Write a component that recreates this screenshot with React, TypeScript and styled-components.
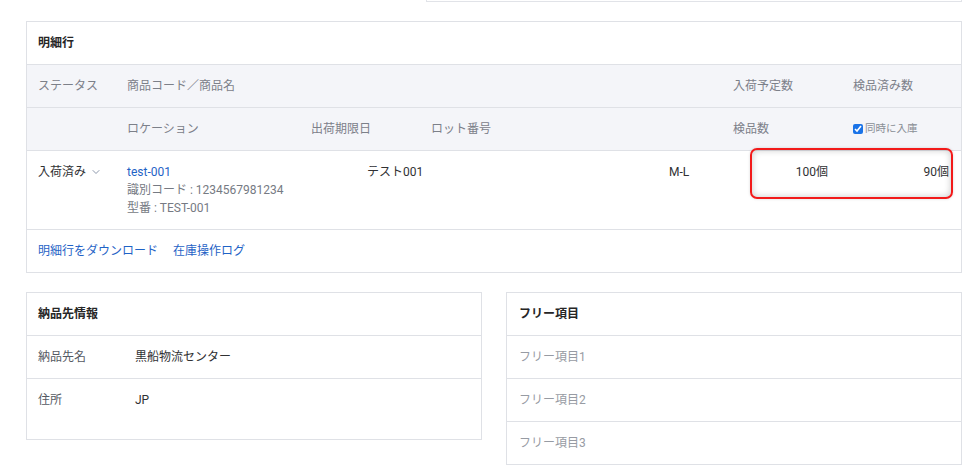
import React from "react";
import styled, { createGlobalStyle } from "styled-components";
import { ChevronDown } from "lucide-react";

const GlobalStyle = createGlobalStyle`
  html, body {
    margin: 0;
    padding: 0;
    background: #ffffff;
  }
  body {
    font-family: Roboto, "Noto Sans CJK JP", "Noto Sans", sans-serif;
    font-size: 12px;
    color: #303133;
  }
`;

const COLS = "89px 184px 56px 64px 238px 64px 120px 96px";

const Page = styled.div`
  padding: 0 2px 24px 26px;
`;

const TopStub = styled.div`
  margin-left: 400px;
  height: 1px;
  border: 1px solid #e1e3e8;
  border-top: none;
  margin-bottom: 19px;
`;

const Card = styled.section`
  position: relative;
  border: 1px solid #dfe1e6;
  background: #fff;
`;

const CardTitle = styled.h2`
  margin: 0;
  padding: 12px 11px;
  font-size: 12px;
  line-height: 18px;
  font-weight: 700;
  color: #262626;
  border-bottom: 1px solid #dfe1e6;
`;

const GridRow = styled.div<{ $head?: boolean }>`
  display: grid;
  grid-template-columns: ${COLS};
  align-items: start;
  padding: 12px 12px 12px 11px;
  line-height: 18px;
  background: ${(p) => (p.$head ? "#f4f5f9" : "#fff")};
  color: ${(p) => (p.$head ? "#7c8089" : "#303133")};
  border-bottom: 1px solid #dfe1e6;
`;

const Cell = styled.div<{ $col: string; $right?: boolean; $padRight?: number }>`
  grid-column: ${(p) => p.$col};
  text-align: ${(p) => (p.$right ? "right" : "left")};
  padding-right: ${(p) => p.$padRight ?? 0}px;
  white-space: nowrap;
`;

const Status = styled.div`
  display: flex;
  align-items: center;
  height: 18px;
  gap: 4px;
  color: #303133;
  svg {
    color: #6f7c96;
  }
`;

const Link = styled.a`
  display: block;
  color: #1f63c6;
  text-decoration: none;
  cursor: pointer;
`;

const SubText = styled.div`
  color: #767a83;
`;

const CheckLabel = styled.label`
  display: flex;
  align-items: center;
  height: 18px;
  gap: 2px;
  font-size: 10.5px;
  color: #8a8e96;
  input {
    margin: 0;
    width: 10px;
    height: 10px;
    accent-color: #1a73e8;
  }
`;

const LinkBar = styled.div`
  display: flex;
  gap: 15px;
  padding: 12px 11px;
  line-height: 18px;
`;

const Highlight = styled.div`
  position: absolute;
  left: 723px;
  top: 126px;
  width: 203px;
  height: 51px;
  box-sizing: border-box;
  border: 2px solid #f21a1a;
  border-radius: 7px;
  box-shadow: inset 0 0 7px rgba(0, 0, 0, 0.22), 0 0 3px rgba(0, 0, 0, 0.15);
  pointer-events: none;
`;

const Columns = styled.div`
  display: grid;
  grid-template-columns: 456px 456px;
  gap: 24px;
  margin-top: 19px;
  align-items: start;
`;

const InfoRow = styled.div<{ $tall?: boolean }>`
  display: grid;
  grid-template-columns: 97px 1fr;
  padding: 12px 11px ${(p) => (p.$tall ? 30 : 12)}px;
  line-height: 18px;
  border-bottom: 1px solid #dfe1e6;
  &:last-child {
    border-bottom: none;
  }
`;

const InfoLabel = styled.div`
  color: #555a63;
`;

const FreeItem = styled.div`
  padding: 12px 12px;
  line-height: 18px;
  color: #979ba3;
  border-bottom: 1px solid #dfe1e6;
  &:last-child {
    border-bottom: none;
  }
`;

const FreeTitle = styled(CardTitle)`
  padding-left: 12px;
`;

export default function App() {
  return (
    <Page>
      <GlobalStyle />
      <TopStub />
      <Card>
        <CardTitle>明細行</CardTitle>
        <GridRow $head>
          <Cell $col="1">ステータス</Cell>
          <Cell $col="2 / 7">商品コード／商品名</Cell>
          <Cell $col="7">入荷予定数</Cell>
          <Cell $col="8">検品済み数</Cell>
        </GridRow>
        <GridRow $head>
          <Cell $col="2">ロケーション</Cell>
          <Cell $col="3 / 5">出荷期限日</Cell>
          <Cell $col="5 / 7">ロット番号</Cell>
          <Cell $col="7">検品数</Cell>
          <Cell $col="8">
            <CheckLabel>
              <input type="checkbox" defaultChecked />
              同時に入庫
            </CheckLabel>
          </Cell>
        </GridRow>
        <GridRow>
          <Cell $col="1">
            <Status>
              入荷済み
              <ChevronDown size={12} strokeWidth={1.6} />
            </Status>
          </Cell>
          <Cell $col="2 / 4">
            <Link>test-001</Link>
            <SubText>識別コード : 1234567981234</SubText>
            <SubText>型番 : TEST-001</SubText>
          </Cell>
          <Cell $col="4 / 6">テスト001</Cell>
          <Cell $col="6">M-L</Cell>
          <Cell $col="7" $right $padRight={25}>
            100個
          </Cell>
          <Cell $col="8" $right>
            90個
          </Cell>
        </GridRow>
        <LinkBar>
          <Link>明細行をダウンロード</Link>
          <Link>在庫操作ログ</Link>
        </LinkBar>
        <Highlight />
      </Card>
      <Columns>
        <Card>
          <CardTitle>納品先情報</CardTitle>
          <InfoRow>
            <InfoLabel>納品先名</InfoLabel>
            <div>黒船物流センター</div>
          </InfoRow>
          <InfoRow $tall>
            <InfoLabel>住所</InfoLabel>
            <div>JP</div>
          </InfoRow>
        </Card>
        <Card>
          <FreeTitle>フリー項目</FreeTitle>
          <FreeItem>フリー項目1</FreeItem>
          <FreeItem>フリー項目2</FreeItem>
          <FreeItem>フリー項目3</FreeItem>
        </Card>
      </Columns>
    </Page>
  );
}
